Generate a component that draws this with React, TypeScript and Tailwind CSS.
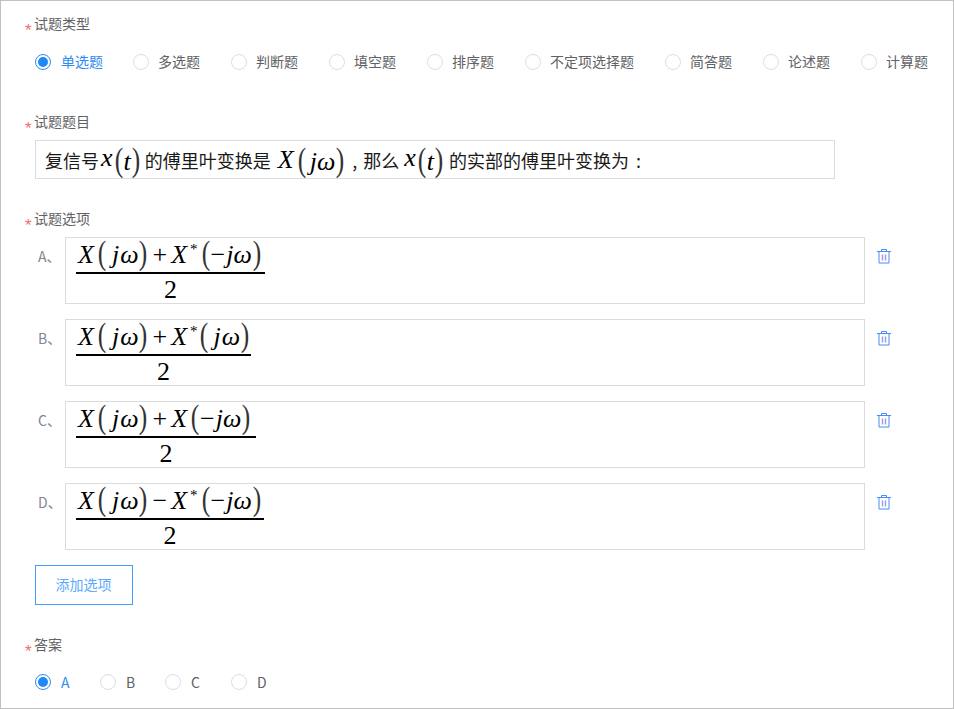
const CJK = 'font-["Noto_Sans_CJK_SC","Liberation_Sans",sans-serif]'

const types = [
  { label: '单选题', w: 'w-[98px]' },
  { label: '多选题', w: 'w-[98px]' },
  { label: '判断题', w: 'w-[98px]' },
  { label: '填空题', w: 'w-[98px]' },
  { label: '排序题', w: 'w-[98px]' },
  { label: '不定项选择题', w: 'w-[140px]' },
  { label: '简答题', w: 'w-[98px]' },
  { label: '论述题', w: 'w-[98px]' },
  { label: '计算题', w: 'w-[68px]' },
]

const answers = [
  { label: 'A', w: 'w-[65px]' },
  { label: 'B', w: 'w-[65px]' },
  { label: 'C', w: 'w-[66px]' },
  { label: 'D', w: 'w-[40px]' },
]

function Radio({ on }: { on?: boolean }) {
  return (
    <span className={`flex h-4 w-4 shrink-0 items-center justify-center rounded-full border bg-white ${on ? 'border-[#2d8cf0]' : 'border-[#dcdee2]'}`}>
      {on && <span className="h-[10px] w-[10px] rounded-full bg-[#1e88f5]" />}
    </span>
  )
}

function Label({ text }: { text: string }) {
  return (
    <div className="flex h-5 -translate-y-px items-center pl-[24px] text-[14px] leading-5 text-[#606266]">
      <span className="mt-[11px] h-[10px] w-[9px] font-['Liberation_Sans',sans-serif] text-[17px] leading-[14px] text-[#f56c6c]">*</span>
      <span>{text}</span>
    </div>
  )
}

// serif maths pieces
const V = ({ c, className = '' }: { c: string; className?: string }) => <span className={`italic ${className}`}>{c}</span>
const Paren = ({ c, className = '' }: { c: string; className?: string }) => (
  <span className={`inline-block origin-center scale-x-[0.85] scale-y-[1.1] text-[30px] font-light leading-none text-[#333] ${className}`}>{c}</span>
)

function XofT() {
  return (
    <span className="inline-flex items-baseline text-[26px] leading-none text-black font-['Liberation_Serif',serif]">
      <V c="x" className="mr-[1px] -translate-y-[4px]" />
      <Paren c="(" />
      <V c="t" className="mx-0" />
      <Paren c=")" />
    </span>
  )
}

function JW({ tight }: { tight?: boolean }) {
  return (
    <>
      <Paren c="(" className="ml-[3px]" />
      <V c="j" className={tight ? 'ml-[3px]' : 'ml-[5px]'} />
      <V c="ω" className={tight ? 'ml-0' : 'ml-[1px]'} />
      <Paren c=")" className="ml-0" />
    </>
  )
}

function NegJW() {
  return (
    <>
      <Paren c="(" className="ml-[3px]" />
      <span>−</span>
      <V c="j" className="ml-[1px]" />
      <V c="ω" className="ml-0" />
      <Paren c=")" className="ml-0" />
    </>
  )
}

function Frac({ w, op, star, neg }: { w: string; op: string; star?: boolean; neg?: boolean }) {
  return (
    <div className={`flex flex-col items-center font-['Liberation_Serif',serif] text-black ${w}`}>
      <div className="flex h-[33px] w-full -translate-y-[2px] items-baseline whitespace-nowrap pl-[2px] pt-[1px] text-[26px] leading-[30px]">
        <V c="X" />
        <JW />
        <span className="mx-[4px] text-[26px]">{op}</span>
        <V c="X" />
        {star && <span className="ml-[3px] -translate-y-[9px] text-[15px] leading-none">*</span>}
        {neg ? <NegJW /> : <span className="-ml-[2px] flex items-baseline"><JW /></span>}
      </div>
      <div className="h-[2px] w-full bg-black" />
      <div className="text-[26px] leading-[31px]">2</div>
    </div>
  )
}

function Trash() {
  return (
    <svg width="16" height="16" viewBox="0 0 16 16" fill="none" stroke="#4a8cf7" strokeWidth="1" className="shrink-0">
      <path d="M1 2.5h14" />
      <path d="M5.5 2.5v-2h5v2" />
      <path d="M3 2.5v11.5h10v-11.5" />
      <path d="M6.5 5.5v6M9.5 5.5v6" stroke="#9d98f5" strokeWidth="1.4" />
    </svg>
  )
}

function Option({ letter, children }: { letter: string; children: any }) {
  return (
    <div className="mb-[15px] flex h-[67px]">
      <div className="w-[30px] shrink-0 pl-[3px] pt-[9px] text-[14px] leading-5 text-[#808695]">{letter}、</div>
      <div className="h-[67px] w-[800px] shrink-0 border border-[#dcdcdc] pl-[10px] pt-[1px]">{children}</div>
      <div className="ml-[11px] pt-[12px]"><Trash /></div>
    </div>
  )
}

export default function App() {
  return (
    <div className={`h-[709px] w-[954px] overflow-hidden border border-[#c0c0c0] bg-white pt-[13px] ${CJK}`}>
      <Label text="试题类型" />

      <div className="mt-[18px] flex h-[20px] items-center pl-[34px]">
        {types.map((t, i) => (
          <div key={t.label} className={`flex shrink-0 items-center gap-[10px] text-[14px] leading-5 ${t.w} ${i === 0 ? 'text-[#2d8cf0]' : 'text-[#606266]'}`}>
            <Radio on={i === 0} />
            <span className={`-translate-y-px ${i === 0 ? '' : '-ml-px'}`}>{t.label}</span>
          </div>
        ))}
      </div>

      <div className="mt-[40px]"><Label text="试题题目" /></div>

      <div className="ml-[34px] mt-[8px] flex h-[39px] w-[800px] items-center border border-[#dcdcdc] pl-[9px] text-[18px] leading-none whitespace-nowrap text-[#1a1a1a]">
        <span>复信号</span>
        <span className="ml-[2px]"><XofT /></span>
        <span className="ml-[4px]">的傅里叶变换是</span>
        <span className="ml-[7px] inline-flex items-baseline text-[26px] leading-none text-black font-['Liberation_Serif',serif]">
          <V c="X" className="-translate-y-[2px]" />
          <JW tight />
        </span>
        <span className="ml-[7px]">,</span>
        <span className="ml-[6px]">那么</span>
        <span className="ml-[5px]"><XofT /></span>
        <span className="ml-[5px]">的实部的傅里叶变换为</span>
        <span className="ml-[7px]">:</span>
      </div>

      <div className="mt-[30px]"><Label text="试题选项" /></div>

      <div className="ml-[34px] mt-[8px]">
        <Option letter="A"><Frac w="w-[189px]" op="+" star neg /></Option>
        <Option letter="B"><Frac w="w-[175px]" op="+" star /></Option>
        <Option letter="C"><Frac w="w-[180px]" op="+" neg /></Option>
        <Option letter="D"><Frac w="w-[188px]" op="−" star neg /></Option>

        <button className="h-10 w-[98px] border border-[#409eff] bg-white text-[14px] text-[#5aa9ff]">
          <span className="-ml-px inline-block -translate-y-px">添加选项</span>
        </button>
      </div>

      <div className="mt-[30px]"><Label text="答案" /></div>

      <div className="mt-[17px] flex h-[20px] items-center pl-[34px]">
        {answers.map((a, i) => (
          <div key={a.label} className={`flex shrink-0 items-center gap-[10px] text-[14px] leading-5 ${a.w} ${i === 0 ? 'text-[#2d8cf0]' : 'text-[#606266]'}`}>
            <Radio on={i === 0} />
            <span>{a.label}</span>
          </div>
        ))}
      </div>
    </div>
  )
}
